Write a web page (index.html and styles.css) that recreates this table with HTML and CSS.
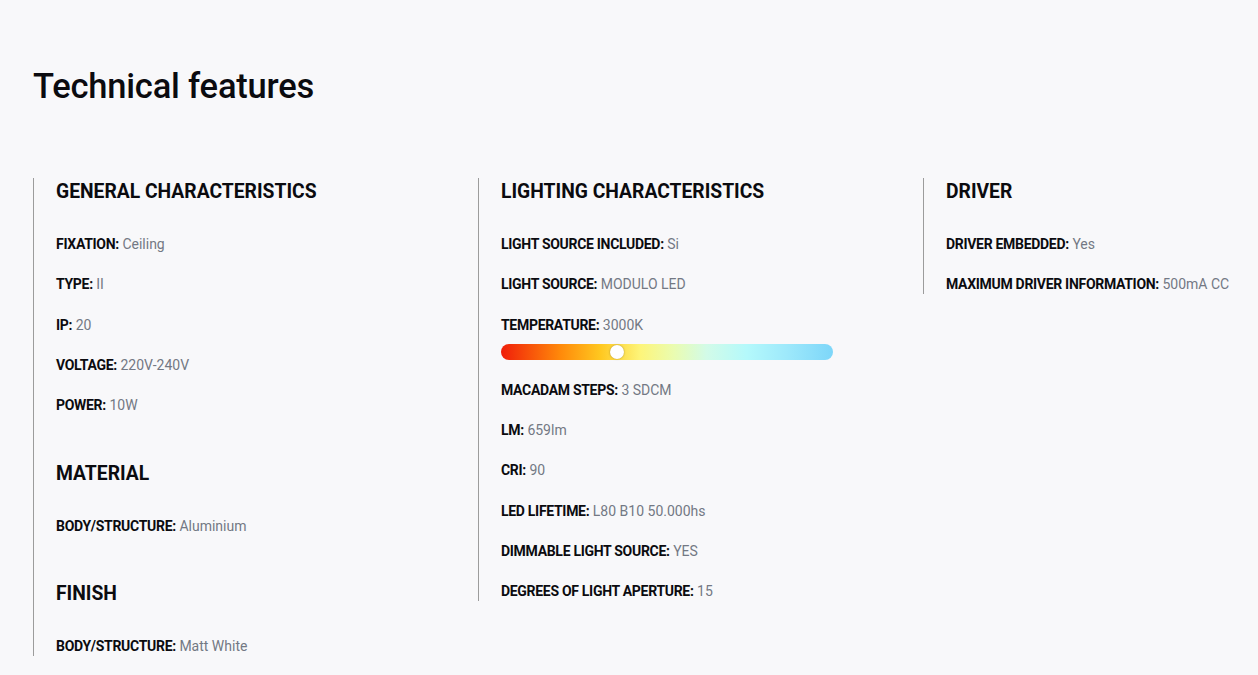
FILE: index.html
```html
<!DOCTYPE html>
<html lang="en">
<head>
<meta charset="utf-8">
<title>Technical features</title>
<link rel="stylesheet" href="styles.css">
</head>
<body>
<main class="page">
  <h1 class="title">Technical features</h1>
  <div class="columns">
    <section class="col">
      <div class="group">
        <h2 class="group-title">GENERAL CHARACTERISTICS</h2>
        <ul class="items">
          <li class="item"><b>FIXATION:</b> <span>Ceiling</span></li>
          <li class="item"><b>TYPE:</b> <span>II</span></li>
          <li class="item"><b>IP:</b> <span>20</span></li>
          <li class="item"><b>VOLTAGE:</b> <span>220V-240V</span></li>
          <li class="item"><b>POWER:</b> <span>10W</span></li>
        </ul>
      </div>
      <div class="group">
        <h2 class="group-title">MATERIAL</h2>
        <ul class="items">
          <li class="item"><b>BODY/STRUCTURE:</b> <span>Aluminium</span></li>
        </ul>
      </div>
      <div class="group">
        <h2 class="group-title">FINISH</h2>
        <ul class="items">
          <li class="item"><b>BODY/STRUCTURE:</b> <span>Matt White</span></li>
        </ul>
      </div>
    </section>
    <section class="col">
      <div class="group">
        <h2 class="group-title">LIGHTING CHARACTERISTICS</h2>
        <ul class="items">
          <li class="item"><b>LIGHT SOURCE INCLUDED:</b> <span>Si</span></li>
          <li class="item"><b>LIGHT SOURCE:</b> <span>MODULO LED</span></li>
          <li class="item item-temp"><b>TEMPERATURE:</b> <span>3000K</span>
            <div class="temp-bar"><div class="temp-knob" style="left: 109px"></div></div>
          </li>
          <li class="item"><b>MACADAM STEPS:</b> <span>3 SDCM</span></li>
          <li class="item"><b>LM:</b> <span>659lm</span></li>
          <li class="item"><b>CRI:</b> <span>90</span></li>
          <li class="item"><b>LED LIFETIME:</b> <span>L80 B10 50.000hs</span></li>
          <li class="item"><b>DIMMABLE LIGHT SOURCE:</b> <span>YES</span></li>
          <li class="item"><b>DEGREES OF LIGHT APERTURE:</b> <span>15</span></li>
        </ul>
      </div>
    </section>
    <section class="col col-last">
      <div class="group">
        <h2 class="group-title">DRIVER</h2>
        <ul class="items">
          <li class="item"><b>DRIVER EMBEDDED:</b> <span>Yes</span></li>
          <li class="item"><b>MAXIMUM DRIVER INFORMATION:</b> <span>500mA CC</span></li>
        </ul>
      </div>
    </section>
  </div>
</main>
</body>
</html>
```
FILE: styles.css
```css
* { box-sizing: border-box; }
html, body {
  margin: 0;
  padding: 0;
  background: #f8f8fa;
  overflow: hidden;
}
body {
  font-family: Roboto, "Liberation Sans", sans-serif;
  color: #0b0b0f;
}
.page {
  padding: 66px 0 0 33px;
}
.title {
  margin: 0 0 72px 0;
  font-size: 34.5px;
  line-height: 40px;
  font-weight: 500;
  letter-spacing: -0.2px;
}
.columns {
  display: grid;
  grid-template-columns: 445px 445px 1fr;
  align-items: start;
}
.col {
  border-left: 1px solid #9c9c9c;
  padding: 1px 0 0 22px;
  display: flex;
  flex-direction: column;
  gap: 45.5px;
}
.group-title {
  margin: 0 0 29px 0;
  font-size: 19.3px;
  line-height: 26px;
  font-weight: 700;
}
.items {
  list-style: none;
  margin: 0;
  padding: 0;
  display: flex;
  flex-direction: column;
  gap: 20.3px;
}
.item {
  font-size: 14px;
  line-height: 20px;
}
.item b {
  font-weight: 700;
  letter-spacing: -0.3px;
}
.item span {
  color: #737884;
}
.temp-bar {
  position: relative;
  margin-top: 9px;
  width: 332px;
  height: 16px;
  border-radius: 8px;
  background: linear-gradient(90deg, #f01e0a 0%, #ff8a0a 18%, #ffc820 30%, #fdf57a 42%, #eafcb0 52%, #d2fbe8 62%, #b4f9fb 74%, #9ee9fb 86%, #7dd6f9 100%);
}
.temp-knob {
  position: absolute;
  top: 1px;
  width: 14px;
  height: 14px;
  border-radius: 50%;
  background: #fff;
  box-shadow: 0 0 2px rgba(0,0,0,0.35);
}
```
